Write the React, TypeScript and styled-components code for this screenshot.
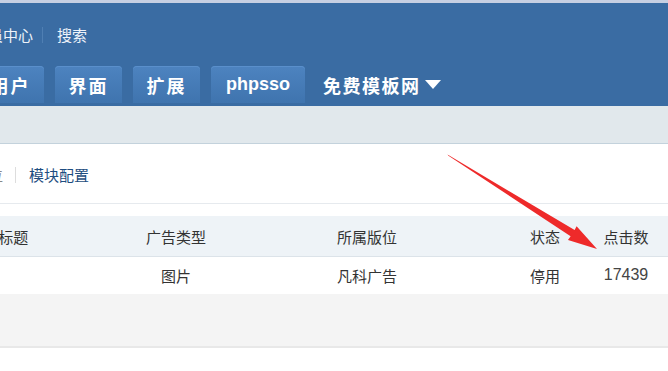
import React from 'react'
import styled, { createGlobalStyle } from 'styled-components'

const GlobalStyle = createGlobalStyle`
  html, body {
    margin: 0;
    padding: 0;
    background: #fff;
    overflow: hidden;
  }
  body {
    font-family: "Noto Sans CJK SC", "Liberation Sans", sans-serif;
  }
`

const Page = styled.div`
  position: relative;
  width: 668px;
  height: 371px;
  overflow: hidden;
  background: #fff;
`

const Header = styled.div`
  border-top: 3px solid #c6cfe2;
  background: #3a6ca3;
  height: 103px;
  display: flex;
  flex-direction: column;
`

const TopLinks = styled.div`
  display: flex;
  align-items: center;
  height: 62px;
  margin-left: -27px;
  padding-top: 1px;
  box-sizing: border-box;
  color: #eef3fa;
  font-size: 15px;
`

const Sep = styled.span<{ $color: string; $l: number; $r: number }>`
  display: inline-block;
  width: 1px;
  height: 16px;
  background: ${p => p.$color};
  margin: 0 ${p => p.$r}px 0 ${p => p.$l}px;
`

const TabRow = styled.div`
  display: flex;
  align-items: flex-end;
  gap: 11px;
  margin-left: -23px;
  height: 38px;
`

const Tab = styled.div<{ $w: number; $latin?: boolean }>`
  width: ${p => p.$w}px;
  height: 37px;
  border-radius: 4px 4px 0 0;
  background: linear-gradient(#4d83c0, #3f74ae);
  box-shadow: inset 0 1px 0 #5a8fcb;
  color: #fff;
  font-weight: 700;
  font-size: 18px;
  font-family: ${p => (p.$latin ? '"Liberation Sans", sans-serif' : 'inherit')};
  display: flex;
  align-items: center;
  justify-content: center;
  letter-spacing: ${p => (p.$latin ? 0 : 2)}px;
`

const PlainTab = styled.div`
  height: 37px;
  display: flex;
  align-items: center;
  color: #fff;
  font-weight: 700;
  font-size: 18px;
  letter-spacing: 1.5px;
  margin-left: 7px;
`

const Caret = styled.span`
  display: inline-block;
  margin-left: 4px;
  width: 0;
  height: 0;
  border-left: 8px solid transparent;
  border-right: 8px solid transparent;
  border-top: 9px solid #fff;
`

const GreyBand = styled.div`
  height: 37px;
  background: #e1e8ec;
  border-bottom: 1px solid #c3d2dc;
`

const SubNav = styled.div`
  height: 60px;
  display: flex;
  align-items: center;
  padding-top: 2px;
  box-sizing: border-box;
  margin-left: -12px;
  font-size: 15px;
  color: #1d4d80;
  border-bottom: 1px solid #e6eaee;
`

const Muted = styled.span`
  color: #888;
`

const Table = styled.div`
  margin-top: 12px;
  margin-left: -100px;
`

const Row = styled.div<{ $head?: boolean; $h: number }>`
  display: grid;
  grid-template-columns: 220px 112px 270px 86px 76px;
  height: ${p => p.$h}px;
  align-items: center;
  font-size: 15px;
  color: #333;
  background: ${p => (p.$head ? '#eef3f7' : '#fff')};
  border-bottom: 1px solid ${p => (p.$head ? '#dce3e9' : '#fff')};
`

const Cell = styled.div`
  text-align: center;
`

const NumCell = styled(Cell)`
  font-family: "Liberation Sans", sans-serif;
  font-size: 16px;
  color: #444;
`

const EmptyRow = styled.div`
  height: 52px;
  background: #f4f4f4;
  border-bottom: 2px solid #e8e8e8;
`

const ArrowLayer = styled.svg`
  position: absolute;
  left: 0;
  top: 0;
  pointer-events: none;
`

const App = () => {
  return (
    <Page>
      <GlobalStyle />
      <Header>
        <TopLinks>
          <span>会员中心</span>
          <Sep $color="#4f7fb3" $l={9} $r={14} />
          <span>搜索</span>
        </TopLinks>
        <TabRow>
          <Tab $w={67}>用户</Tab>
          <Tab $w={67}>界面</Tab>
          <Tab $w={67}>扩展</Tab>
          <Tab $w={94} $latin>phpsso</Tab>
          <PlainTab>
            免费模板网
            <Caret />
          </PlainTab>
        </TabRow>
      </Header>
      <GreyBand />
      <SubNav>
        <Muted>位</Muted>
        <Sep $color="#dddddd" $l={12} $r={13} />
        <span>模块配置</span>
      </SubNav>
      <Table>
        <Row $head $h={40}>
          <Cell>&nbsp;&nbsp;标题</Cell>
          <Cell>广告类型</Cell>
          <Cell>所属版位</Cell>
          <Cell>状态</Cell>
          <Cell>点击数</Cell>
        </Row>
        <Row $h={36}>
          <Cell></Cell>
          <Cell>图片</Cell>
          <Cell>凡科广告</Cell>
          <Cell>停用</Cell>
          <NumCell>17439</NumCell>
        </Row>
        <EmptyRow />
      </Table>
      <ArrowLayer width="668" height="371" viewBox="0 0 668 371">
        <polygon
          points="447.5,154.6 574.6,229.9 576.6,226.3 597,249 568,239.9 570.6,236.3 448.1,155.4"
          fill="#ee2a2a"
        />
      </ArrowLayer>
    </Page>
  )
}

export default App
